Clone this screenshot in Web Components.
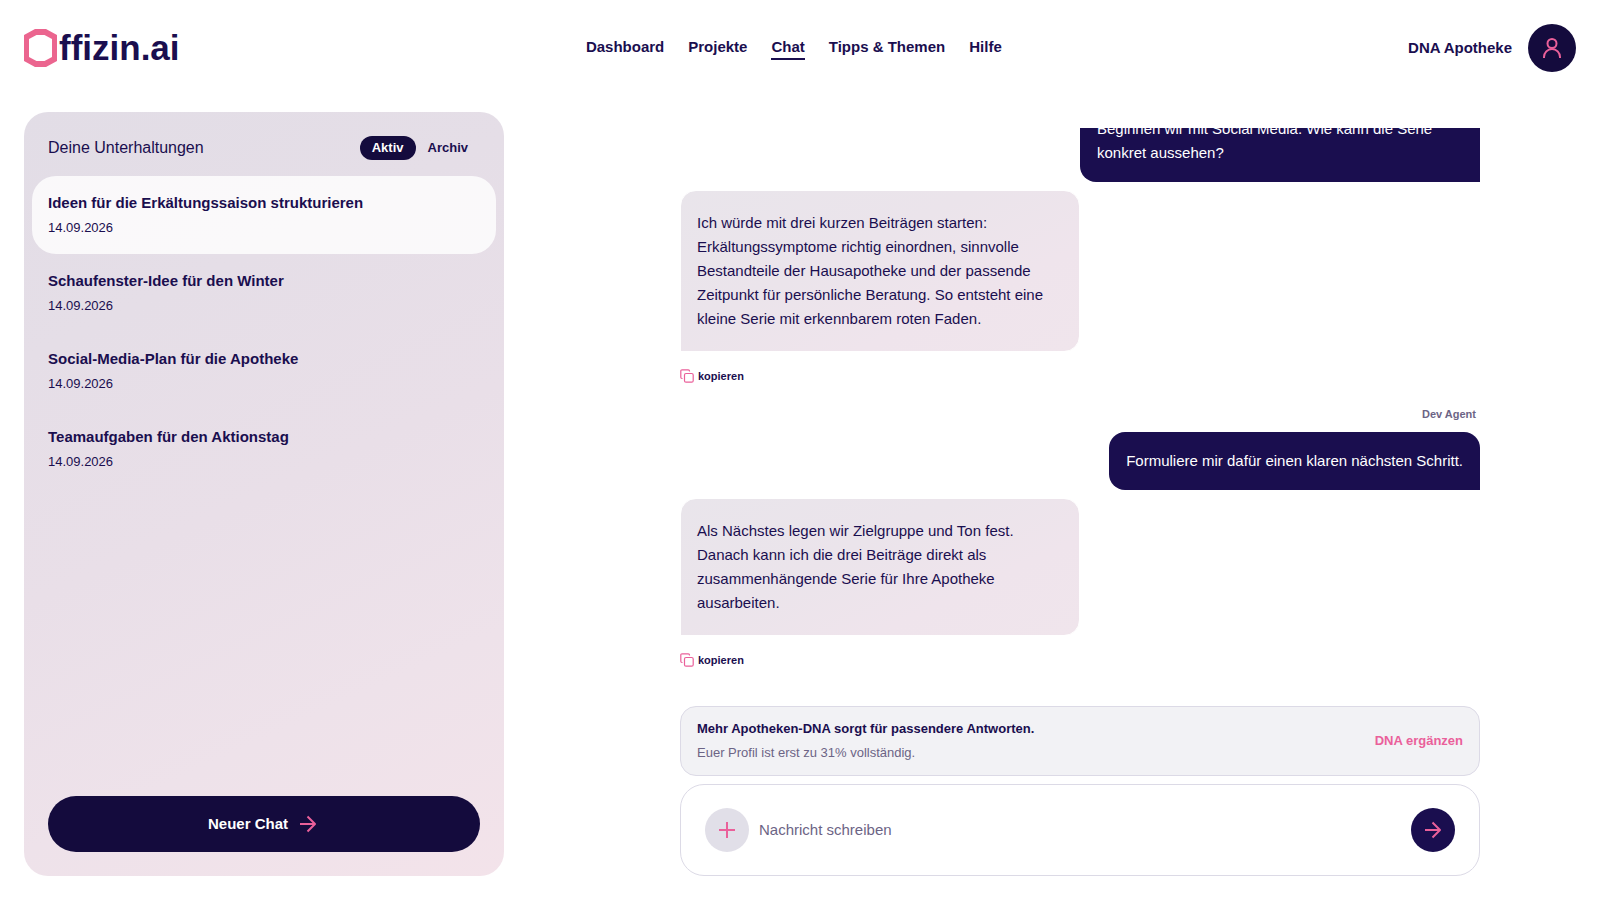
<!DOCTYPE html>
<html lang="de">
<head>
    <meta charset="UTF-8">
    <meta name="viewport" content="width=device-width, initial-scale=1.0">
    <title>Offizin.ai - Chat</title>
    <style>
        :root {
            --navy: #1a0e4f;
            --dark: #140b3d;
            --pink: #ea609a;
            --muted: #6c6485;
            --line: #dcdae6;
        }
        body {
            margin: 0;
            font: 15px/24px "Liberation Sans", Arial, sans-serif;
            color: var(--navy);
            background: #fff;
        }
    </style>
</head>
<body>
    <offizin-app>
        <app-header slot="header">
            <nav-link href="#dashboard">Dashboard</nav-link>
            <nav-link href="#projekte">Projekte</nav-link>
            <nav-link href="#chat" active>Chat</nav-link>
            <nav-link href="#tipps">Tipps &amp; Themen</nav-link>
            <nav-link href="#hilfe">Hilfe</nav-link>
            <span slot="account">DNA Apotheke</span>
        </app-header>

        <chat-sidebar slot="sidebar">
            <chat-item date="14.09.2026" selected>Ideen für die Erkältungssaison strukturieren</chat-item>
            <chat-item date="14.09.2026">Schaufenster-Idee für den Winter</chat-item>
            <chat-item date="14.09.2026">Social-Media-Plan für die Apotheke</chat-item>
            <chat-item date="14.09.2026">Teamaufgaben für den Aktionstag</chat-item>
        </chat-sidebar>

        <user-message>Beginnen wir mit Social Media. Wie kann die Serie konkret aussehen?</user-message>
        <bot-message>Ich würde mit drei kurzen Beiträgen starten: Erkältungssymptome richtig einordnen, sinnvolle Bestandteile der Hausapotheke und der passende Zeitpunkt für persönliche Beratung. So entsteht eine kleine Serie mit erkennbarem roten Faden.</bot-message>
        <user-message author="Dev Agent">Formuliere mir dafür einen klaren nächsten Schritt.</user-message>
        <bot-message>Als Nächstes legen wir Zielgruppe und Ton fest. Danach kann ich die drei Beiträge direkt als zusammenhängende Serie für Ihre Apotheke ausarbeiten.</bot-message>

        <dna-banner slot="footer">
            Mehr Apotheken-DNA sorgt für passendere Antworten.
            <span slot="hint">Euer Profil ist erst zu 31% vollständig.</span>
        </dna-banner>
        <chat-composer slot="footer"></chat-composer>
    </offizin-app>

    <script>
        const baseStyle = `
            *, :host { box-sizing: border-box; }
            button, input { font: inherit; color: inherit; border: none; margin: 0; padding: 0; background: none; }
            button { cursor: pointer; }
            a { color: inherit; text-decoration: none; }
            svg { display: block; flex: none; fill: none; stroke: var(--pink); stroke-width: 2; }
        `;

        const arrowIcon = `
            <svg width="24" height="24" viewBox="0 0 24 24" stroke-linejoin="round" aria-hidden="true">
                <path d="M4 12h15M11.500 4.500L19 12l-7.500 7.500" />
            </svg>
        `;

        class BaseElement extends HTMLElement {
            constructor() {
                super();
                this.attachShadow({ mode: 'open' });
            }

            connectedCallback() {
                this.shadowRoot.innerHTML = `<style>${baseStyle}</style>${this.render()}`;
            }
        }

        class OffizinApp extends BaseElement {
            render() {
                return `
                    <style>
                        :host {
                            display: flex;
                            flex-direction: column;
                            height: 100vh;
                            padding: 24px;
                        }
                        .content {
                            flex: 1;
                            min-height: 0;
                            display: grid;
                            grid-template-columns: minmax(320px, 480px) minmax(0, 1fr);
                            grid-template-rows: minmax(0, 1fr);
                            gap: 80px;
                            margin-top: 40px;
                        }
                        main {
                            display: flex;
                            flex-direction: column;
                            width: 100%;
                            max-width: 800px;
                            margin: 0 auto;
                            padding-top: 16px;
                        }
                        .messages {
                            flex: 1;
                            min-height: 0;
                            overflow: hidden;
                            display: flex;
                            flex-direction: column;
                            justify-content: flex-end;
                            gap: 8px;
                            padding-bottom: 38px;
                        }
                        .footer {
                            display: flex;
                            flex-direction: column;
                            gap: 8px;
                        }
                    </style>
                    <slot name="header"></slot>
                    <div class="content">
                        <slot name="sidebar"></slot>
                        <main>
                            <div class="messages"><slot></slot></div>
                            <div class="footer"><slot name="footer"></slot></div>
                        </main>
                    </div>
                `;
            }
        }

        class AppHeader extends BaseElement {
            render() {
                return `
                    <style>
                        :host { display: block; }
                        header {
                            display: flex;
                            align-items: center;
                            justify-content: space-between;
                            font-weight: 700;
                        }
                        .logo {
                            display: flex;
                            align-items: center;
                            gap: 2px;
                            font-size: 35px;
                            line-height: 40px;
                        }
                        .logo svg { stroke: none; fill: #eb658f; }
                        nav {
                            display: flex;
                            gap: 24px;
                        }
                        .account {
                            display: flex;
                            align-items: center;
                            gap: 16px;
                        }
                        .avatar {
                            display: grid;
                            place-items: center;
                            width: 48px;
                            height: 48px;
                            border-radius: 50%;
                            background: var(--dark);
                        }
                    </style>
                    <header>
                        <a class="logo" href="#">
                            <svg width="33" height="38" viewBox="0 0 33 38" fill-rule="evenodd" aria-hidden="true">
                                <path d="M11 0h11l11 6v26l-11 6H11L0 32V6zM12.500 6L5 10v18l7.500 4h8l7.500-4V10l-7.500-4z" />
                            </svg>
                            <span>ffizin.ai</span>
                        </a>
                        <nav><slot></slot></nav>
                        <div class="account">
                            <slot name="account"></slot>
                            <button class="avatar" type="button" aria-label="Profil">
                                <svg width="24" height="24" viewBox="0 0 24 24" aria-hidden="true">
                                    <circle cx="12" cy="7.500" r="4.500" />
                                    <path d="M4 22v-1a8 8 0 0 1 16 0v1" />
                                </svg>
                            </button>
                        </div>
                    </header>
                `;
            }
        }

        class NavLink extends BaseElement {
            render() {
                return `
                    <style>
                        :host { display: block; }
                        a {
                            display: block;
                            border-bottom: 2px solid transparent;
                            line-height: 22px;
                        }
                        :host([active]) a { border-bottom-color: var(--navy); }
                    </style>
                    <a href="${this.getAttribute('href')}"><slot></slot></a>
                `;
            }
        }

        class ChatSidebar extends BaseElement {
            render() {
                return `
                    <style>
                        :host {
                            display: flex;
                            flex-direction: column;
                            padding: 24px 8px;
                            border-radius: 24px;
                            background: linear-gradient(155deg, #e2dde6 0%, #e5dee7 25%, #e9dfe8 50%, #eee2ea 75%, #f3e3ea 100%);
                        }
                        .head {
                            display: flex;
                            align-items: center;
                            justify-content: space-between;
                            padding: 0 16px;
                            margin-bottom: 16px;
                        }
                        h2 {
                            margin: 0;
                            font-size: 16px;
                            font-weight: 500;
                        }
                        .tabs {
                            display: flex;
                            font-size: 13px;
                            font-weight: 700;
                        }
                        .tabs button {
                            padding: 0 12px;
                            border-radius: 12px;
                            line-height: 24px;
                        }
                        .tabs .active {
                            background: var(--dark);
                            color: #fff;
                        }
                        .list { flex: 1; }
                        .new {
                            display: flex;
                            align-items: center;
                            justify-content: center;
                            gap: 8px;
                            height: 56px;
                            margin: 0 16px;
                            border-radius: 28px;
                            background: var(--dark);
                            color: #fff;
                            font-weight: 700;
                        }
                    </style>
                    <div class="head">
                        <h2>Deine Unterhaltungen</h2>
                        <div class="tabs">
                            <button class="active" type="button">Aktiv</button>
                            <button type="button">Archiv</button>
                        </div>
                    </div>
                    <div class="list"><slot></slot></div>
                    <button class="new" type="button">Neuer Chat ${arrowIcon}</button>
                `;
            }
        }

        class ChatItem extends BaseElement {
            render() {
                return `
                    <style>
                        :host { display: block; }
                        button {
                            display: block;
                            width: 100%;
                            padding: 15px 16px 13px;
                            border-radius: 24px;
                            text-align: left;
                            font-weight: 700;
                        }
                        :host([selected]) button { background: rgba(255, 255, 255, 0.8); }
                        time {
                            display: block;
                            font-size: 13px;
                            line-height: 26px;
                            font-weight: 400;
                        }
                    </style>
                    <button type="button"><slot></slot><time>${this.getAttribute('date')}</time></button>
                `;
            }
        }

        class UserMessage extends BaseElement {
            render() {
                const author = this.getAttribute('author');
                return `
                    <style>
                        :host {
                            display: flex;
                            flex-direction: column;
                            align-items: flex-end;
                            flex: none;
                            gap: 8px;
                        }
                        .author {
                            margin-top: 12px;
                            padding-right: 4px;
                            font-size: 11px;
                            font-weight: 700;
                            line-height: 20px;
                            color: var(--muted);
                        }
                        .bubble {
                            max-width: 50%;
                            padding: 17px;
                            border-radius: 16px 16px 0 16px;
                            background: var(--navy);
                            color: #fff;
                        }
                    </style>
                    ${author ? `<div class="author">${author}</div>` : ''}
                    <div class="bubble"><slot></slot></div>
                `;
            }
        }

        class BotMessage extends BaseElement {
            render() {
                return `
                    <style>
                        :host {
                            display: flex;
                            flex-direction: column;
                            align-items: flex-start;
                            flex: none;
                            gap: 16px;
                        }
                        .bubble {
                            max-width: 50%;
                            padding: 20px 16px;
                            border: 1px solid #fff;
                            border-radius: 16px 16px 16px 0;
                            background: linear-gradient(155deg, #e9e5eb 0%, #ebe4eb 40%, #efe4ec 70%, #f0e5ec 100%);
                        }
                        .copy {
                            display: flex;
                            align-items: center;
                            gap: 4px;
                            font-size: 11px;
                            font-weight: 700;
                            line-height: 16px;
                        }
                        .copy svg { stroke-width: 1.2; }
                    </style>
                    <div class="bubble"><slot></slot></div>
                    <button class="copy" type="button">
                        <svg width="14" height="14" viewBox="0 0 14 14" aria-hidden="true">
                            <rect x="4.500" y="4.500" width="8.700" height="8.700" rx="1.500" />
                            <path d="M2.500 9.500H2A1.200 1.200 0 0 1 .8 8.300V2A1.200 1.200 0 0 1 2 .8h6.300A1.200 1.200 0 0 1 9.500 2v.5" />
                        </svg>
                        kopieren
                    </button>
                `;
            }
        }

        class DnaBanner extends BaseElement {
            render() {
                return `
                    <style>
                        :host {
                            display: flex;
                            align-items: center;
                            justify-content: space-between;
                            padding: 10px 16px;
                            border: 1px solid var(--line);
                            border-radius: 16px;
                            background: #f2f2f5;
                            font-size: 13px;
                            font-weight: 700;
                        }
                        .hint {
                            color: var(--muted);
                            font-weight: 400;
                        }
                        a { color: var(--pink); }
                    </style>
                    <div>
                        <div><slot></slot></div>
                        <div class="hint"><slot name="hint"></slot></div>
                    </div>
                    <a href="#dna">DNA ergänzen</a>
                `;
            }
        }

        class ChatComposer extends BaseElement {
            connectedCallback() {
                super.connectedCallback();
                this.shadowRoot.querySelector('form').addEventListener('submit', (event) => event.preventDefault());
            }

            render() {
                return `
                    <style>
                        :host { display: block; }
                        form {
                            display: flex;
                            align-items: center;
                            gap: 10px;
                            padding: 23px 24px;
                            border: 1px solid var(--line);
                            border-radius: 24px;
                        }
                        button {
                            display: grid;
                            place-items: center;
                            width: 44px;
                            height: 44px;
                            border-radius: 50%;
                        }
                        .add { background: #e1dfe8; }
                        .send { background: var(--navy); }
                        input {
                            flex: 1;
                            min-width: 0;
                            height: 24px;
                            outline: none;
                        }
                        input::placeholder { color: var(--muted); opacity: 1; }
                    </style>
                    <form>
                        <button class="add" type="button" aria-label="Anhang hinzufügen">
                            <svg width="24" height="24" viewBox="0 0 24 24" aria-hidden="true">
                                <path d="M4 12h16M12 4v16" />
                            </svg>
                        </button>
                        <input type="text" aria-label="Nachricht" placeholder="Nachricht schreiben">
                        <button class="send" type="submit" aria-label="Senden">${arrowIcon}</button>
                    </form>
                `;
            }
        }

        customElements.define('offizin-app', OffizinApp);
        customElements.define('app-header', AppHeader);
        customElements.define('nav-link', NavLink);
        customElements.define('chat-sidebar', ChatSidebar);
        customElements.define('chat-item', ChatItem);
        customElements.define('user-message', UserMessage);
        customElements.define('bot-message', BotMessage);
        customElements.define('dna-banner', DnaBanner);
        customElements.define('chat-composer', ChatComposer);
    </script>
</body>
</html>
